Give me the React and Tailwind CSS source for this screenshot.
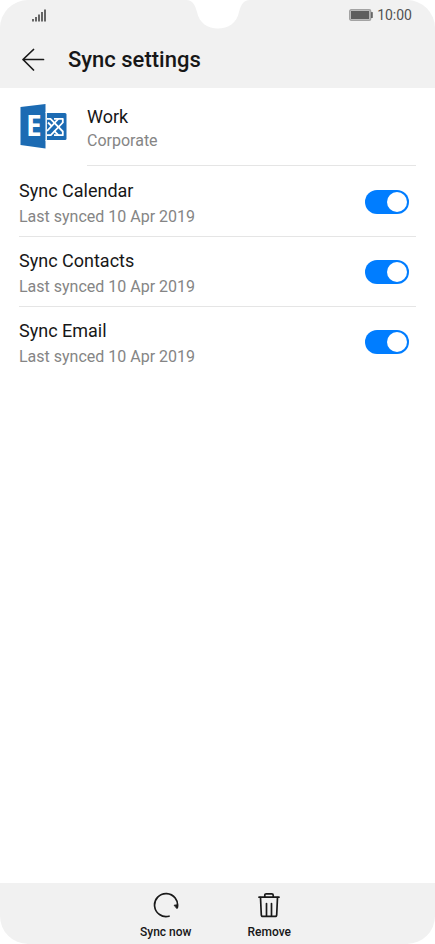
import React, { useState } from "react";

const syncItems = [
  { id: "calendar", label: "Sync Calendar", lastSynced: "Last synced 10 Apr 2019" },
  { id: "contacts", label: "Sync Contacts", lastSynced: "Last synced 10 Apr 2019" },
  { id: "email", label: "Sync Email", lastSynced: "Last synced 10 Apr 2019" },
];

const SignalIcon = () => (
  <svg width="14" height="13" viewBox="0 0 14 13" fill="#666666" aria-hidden="true">
    <rect x="0" y="10" width="2" height="2.5" />
    <rect x="3" y="8" width="2" height="4.5" />
    <rect x="6" y="5.5" width="2" height="7" />
    <rect x="9" y="3" width="2" height="9.5" />
    <rect x="12" y="0.5" width="2" height="12" />
  </svg>
);

const BatteryIcon = () => (
  <svg width="24" height="12" viewBox="0 0 24 12" aria-hidden="true">
    <rect x="0.7" y="0.7" width="21" height="10.6" rx="1.5" fill="#d0d0d0" stroke="#a3a3a3" strokeWidth="1.4" />
    <rect x="2" y="2" width="18.2" height="8" fill="#5e5e5e" />
    <rect x="22" y="3" width="1.8" height="6" rx="0.6" fill="#666666" />
  </svg>
);

const BackIcon = () => (
  <svg width="24" height="24" viewBox="0 0 24 24" fill="none" stroke="#1a1a1a" strokeWidth="1.7" strokeLinecap="round" strokeLinejoin="round" aria-hidden="true">
    <path d="M21.500 11.500H1M11.500 1.500 1 11.500l10.500 10.500" />
  </svg>
);

const ExchangeLogo = () => (
  <svg width="47" height="46" viewBox="0 0 47 46" role="img" aria-label="Exchange">
    <rect x="22" y="9" width="24.5" height="27" rx="1.5" fill="#1c6bb3" />
    <g fill="none" stroke="#ffffff" strokeWidth="1.8" strokeLinejoin="round">
      <path d="M27 14.800h3.500L42.800 27.500v3.700h-4.500l-4.300-4.500" />
      <path d="M42.800 19v-4.200h-4.500L27 27" />
      <path d="M34 14.800h4.300M42.800 18.500l-12 12.700H27" />
      <path d="M28 18.500l4 4M34 31.200h4.300" />
    </g>
    <path d="M0.500 3 25.500 0v44.500L0.500 41z" fill="#1c6bb3" />
    <path d="M26.200 8v29" stroke="#ffffff" strokeWidth="1.400" />
    <text x="6" y="32" fontSize="28" fontWeight="700" fontFamily="Open Sans, sans-serif" fill="#ffffff">E</text>
  </svg>
);

const SyncIcon = () => (
  <svg width="26" height="26" viewBox="0 0 26 26" fill="none" stroke="#1a1a1a" strokeWidth="1.7" strokeLinecap="round" aria-hidden="true">
    <path d="M16 24.200A11.500 11.500 0 1 1 24.300 15.500" />
    <path d="M21.500 13.200l3.200-.4-.7 3.400z" fill="#1a1a1a" strokeWidth="1" />
  </svg>
);

const TrashIcon = () => (
  <svg width="26" height="26" viewBox="0 0 26 26" fill="none" stroke="#1a1a1a" strokeWidth="1.7" strokeLinecap="round" strokeLinejoin="round" aria-hidden="true">
    <path d="M3 5.200h20M8.800 5V3.200c0-.8.6-1.400 1.400-1.400h5.600c.8 0 1.400.6 1.400 1.400V5" />
    <path d="M4.500 5.500l.8 17.200c0 1 .7 1.700 1.700 1.700h12c1 0 1.700-.7 1.700-1.700l.8-17.200M10.500 11.500v12M15.500 11.500v12" />
  </svg>
);

const SyncRow = ({ item, checked, onChange }) => (
  <li className="border-b border-neutral-200 last:border-b-0">
    <label htmlFor={item.id} className="flex h-[69px] cursor-pointer items-center justify-between pr-[7px]">
      <span className="pt-0.5">
        <span className="block text-lg leading-6 text-neutral-900">{item.label}</span>
        <span className="mt-1 block text-base leading-5 text-[#858585]">{item.lastSynced}</span>
      </span>
      <input
        id={item.id}
        type="checkbox"
        role="switch"
        checked={checked}
        onChange={onChange}
        className="flex h-6 w-11 shrink-0 cursor-pointer appearance-none items-center rounded-full bg-neutral-300 p-0.5 before:h-5 before:w-5 before:rounded-full before:bg-white before:content-[''] checked:justify-end checked:bg-[#007dff]"
      />
    </label>
  </li>
);

const App = () => {
  const [enabled, setEnabled] = useState({ calendar: true, contacts: true, email: true });

  const toggle = (id) => {
    setEnabled((prev) => ({ ...prev, [id]: !prev[id] }));
  };

  return (
    <div className="flex min-h-screen flex-col overflow-hidden rounded-[28px] bg-white font-[Roboto,sans-serif]">
      <header className="relative bg-[#f1f1f1]">
        {/* Camera notch */}
        <svg className="absolute top-0 left-1/2 -translate-x-1/2" width="64" height="29" viewBox="0 0 64 29" aria-hidden="true">
          <path d="M0 0C7 0 9 5 11 12C13 23 22 28.500 32 28.500S51 23 53 12C55 5 57 0 64 0Z" fill="#ffffff" />
        </svg>
        <div className="flex h-[30px] items-center justify-between pr-[23px] pl-8">
          <SignalIcon />
          <div className="flex items-center gap-1 text-sm text-neutral-600">
            <BatteryIcon />
            <span>10:00</span>
          </div>
        </div>
        <div className="flex h-[58px] items-center gap-[22px] px-[22px] pt-px">
          <button type="button" aria-label="Back">
            <BackIcon />
          </button>
          <h1 className="text-[22px] leading-7 font-medium text-neutral-900">Sync settings</h1>
        </div>
      </header>

      <main className="grow px-[19px]">
        <section className="flex items-center gap-5 pl-px">
          <ExchangeLogo />
          <div className="flex h-[78px] grow flex-col justify-end border-b border-neutral-200 pb-3">
            <h2 className="text-lg leading-6 text-neutral-900">Work</h2>
            <p className="text-base leading-6 text-[#858585]">Corporate</p>
          </div>
        </section>
        <ul className="pt-px">
          {syncItems.map((item) => (
            <SyncRow key={item.id} item={item} checked={enabled[item.id]} onChange={() => toggle(item.id)} />
          ))}
        </ul>
      </main>

      <footer className="flex h-[61px] items-end justify-center gap-14 bg-[#f1f1f1] pr-1 pb-1">
        <button type="button" className="flex flex-col items-center gap-1.5 text-xs font-medium text-neutral-900">
          <SyncIcon />
          Sync now
        </button>
        <button type="button" className="flex flex-col items-center gap-1.5 text-xs font-medium text-neutral-900">
          <TrashIcon />
          Remove
        </button>
      </footer>
    </div>
  );
};

export default App;
